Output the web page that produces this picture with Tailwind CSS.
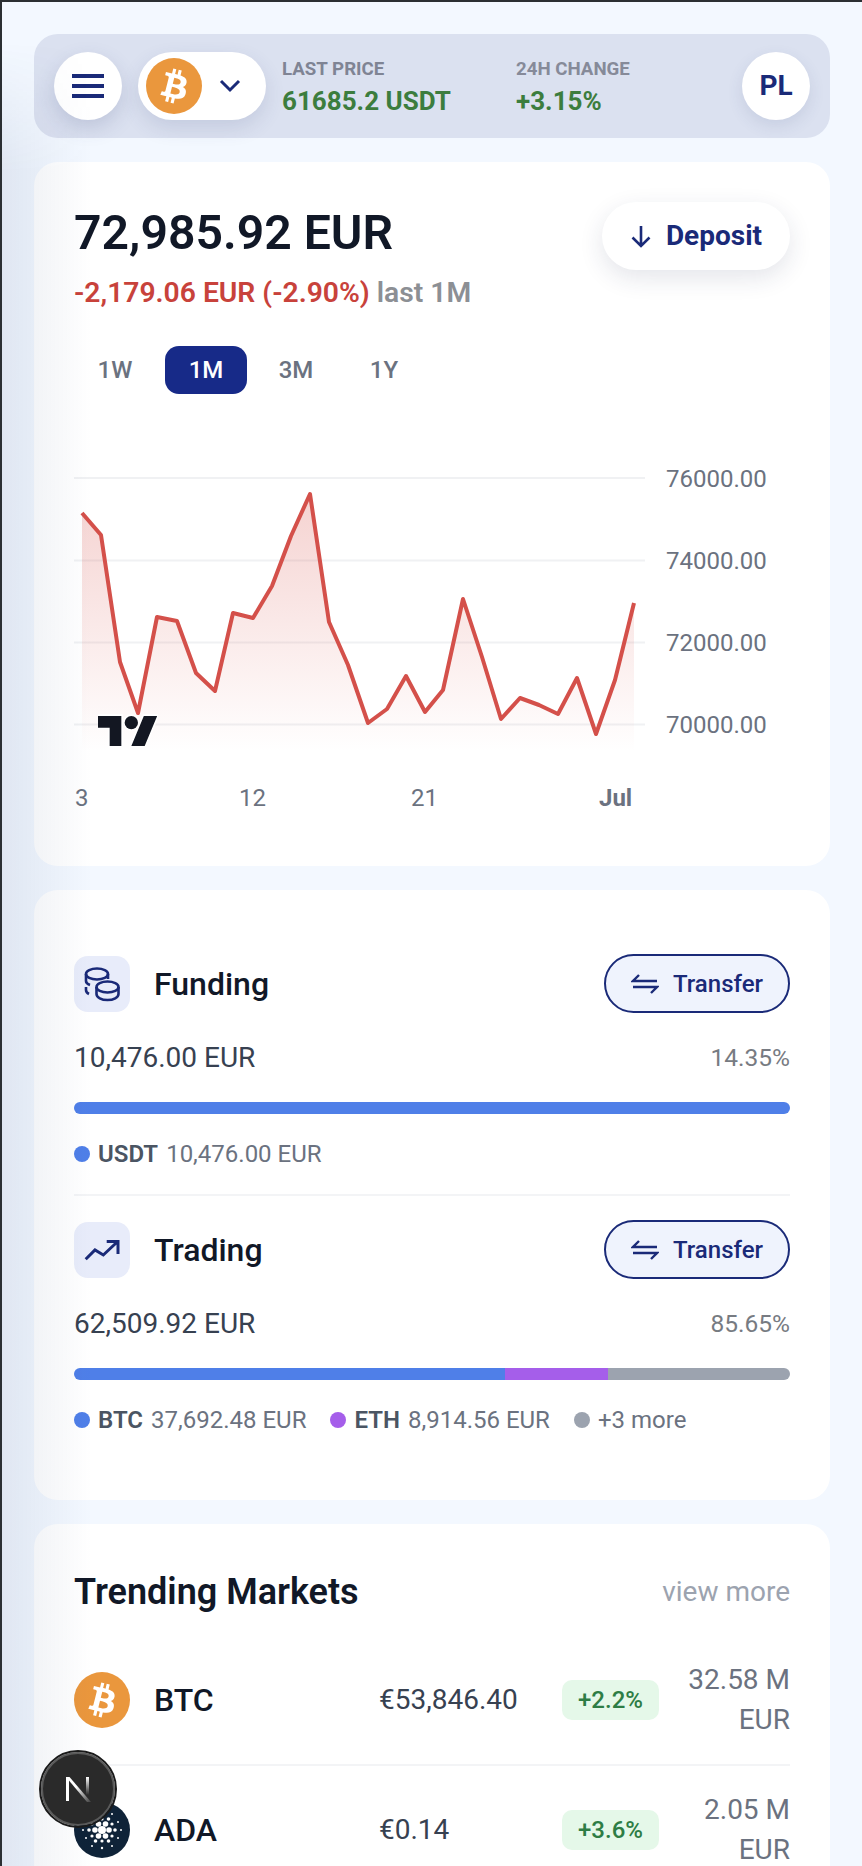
<!DOCTYPE html>
<html lang="en">
<head>
    <meta charset="UTF-8">
    <meta name="viewport" content="width=device-width, initial-scale=1.0">
    <title>Wallet</title>
    <script src="https://cdn.jsdelivr.net/npm/@tailwindcss/browser@4"></script>
</head>
<body class="relative h-screen overflow-hidden border-t-2 border-l-2 border-[#2b2f33] bg-[#f3f8ff] font-[family-name:Roboto,sans-serif]">
    <main class="flex flex-col gap-[24px] pt-[32px] pl-[32px] pr-[32px]">

        <!-- Top bar -->
        <header class="flex h-[104px] shrink-0 items-center rounded-[24px] bg-[#dbe1f0] pl-[20px] pr-[20px]">
            <button class="flex h-[68px] w-[68px] flex-col items-center justify-center gap-[6px] rounded-full bg-white shadow-[0_8px_20px_rgba(60,70,120,0.18)]">
                <span class="h-[4px] w-[32px] bg-[#1a2a78]"></span>
                <span class="h-[4px] w-[32px] bg-[#1a2a78]"></span>
                <span class="h-[4px] w-[32px] bg-[#1a2a78]"></span>
            </button>
            <button class="ml-[16px] flex h-[68px] w-[128px] items-center rounded-full bg-white pl-[8px] shadow-[0_8px_20px_rgba(60,70,120,0.14)]">
                <svg class="h-[56px] w-[56px]" viewBox="0 0 32 32">
                    <circle cx="16" cy="16" r="16" fill="#ea973d"/>
                    <path fill="#fff" d="M23.189 14.02c.314-2.096-1.283-3.223-3.465-3.975l.708-2.84-1.728-.43-.69 2.765c-.454-.114-.92-.22-1.385-.326l.695-2.783L15.596 6l-.708 2.839c-.376-.086-.746-.17-1.104-.26l.002-.009-2.384-.595-.46 1.846s1.283.294 1.256.312c.7.175.826.638.805 1.006l-.806 3.235c.048.012.11.03.18.057l-.183-.045-1.13 4.532c-.086.212-.303.531-.793.41.018.025-1.256-.313-1.256-.313l-.858 1.978 2.25.561c.418.105.828.215 1.231.318l-.715 2.872 1.727.43.708-2.84c.472.127.93.245 1.378.357l-.706 2.828 1.728.43.715-2.866c2.948.558 5.164.333 6.097-2.333.752-2.146-.037-3.385-1.588-4.192 1.13-.26 1.98-1.003 2.207-2.538zm-3.95 5.538c-.533 2.147-4.148.986-5.32.695l.95-3.805c1.172.293 4.929.872 4.37 3.11zm.535-5.569c-.487 1.953-3.495.96-4.47.717l.86-3.45c.975.243 4.118.696 3.61 2.733z"/>
                </svg>
                <svg class="ml-[17px] h-[14px] w-[22px]" viewBox="0 0 22 14" fill="none" stroke="#1a2a78" stroke-width="3"><path d="M2 2l9 9 9-9"/></svg>
            </button>
            <div class="ml-[16px] w-[234px] pt-[2px]">
                <div class="text-[18.700px] leading-[20px] font-bold text-[#7f8494]">LAST PRICE</div>
                <div class="mt-[8px] text-[26px] leading-[28px] font-bold text-[#3c7d3e]">61685.2 USDT</div>
            </div>
            <div class="pt-[2px]">
                <div class="text-[18.700px] leading-[20px] font-bold text-[#868a99]">24H CHANGE</div>
                <div class="mt-[8px] text-[26px] leading-[28px] font-bold text-[#3c7d3e]">+3.15%</div>
            </div>
            <button class="ml-auto flex h-[68px] w-[68px] items-center justify-center rounded-full bg-white text-[28px] font-bold text-[#1a2a78] shadow-[0_6px_16px_rgba(60,70,120,0.12)]">PL</button>
        </header>

        <!-- Balance + chart -->
        <section class="h-[704px] shrink-0 rounded-[24px] bg-white pt-[40px] pl-[40px] pr-[40px]">
            <div class="flex items-start justify-between">
                <div>
                    <div class="text-[48.200px] leading-[62px] font-semibold text-[#111827]">72,985.92 EUR</div>
                    <div class="mt-[12px] text-[28.250px] leading-[34px] font-semibold text-[#c8423b]">-2,179.06 EUR (-2.90%) <span class="text-[#8c8f94]">last 1M</span></div>
                </div>
                <button class="flex h-[68px] w-[188px] items-center justify-center gap-[14px] rounded-full bg-white text-[28px] font-bold text-[#1a2a78] shadow-[0_8px_24px_rgba(30,40,80,0.12)]">
                    <svg class="h-[24px] w-[22px]" viewBox="0 0 22 24" fill="none" stroke="#1a2a78" stroke-width="2.600"><path d="M11 2v20M2.500 13.500L11 22l8.500-8.500"/></svg>
                    Deposit
                </button>
            </div>
            <div class="mt-[36px] flex items-center text-[24px] leading-[48px] font-medium text-[#6b7280]">
                <button class="h-[48px] w-[82px] rounded-[14px]">1W</button>
                <button class="ml-[9px] h-[48px] w-[82px] rounded-[14px] bg-[#172a88] text-white">1M</button>
                <button class="ml-[8px] h-[48px] w-[82px] rounded-[14px]">3M</button>
                <button class="ml-[6px] h-[48px] w-[82px] rounded-[14px]">1Y</button>
            </div>
            <svg class="mt-[60px] -ml-[40px] block" width="796" height="390" viewBox="34 454 796 390">
                <defs>
                    <linearGradient id="area" x1="0" y1="0" x2="0" y2="1" gradientUnits="objectBoundingBox">
                        <stop offset="0" stop-color="#d9534c" stop-opacity="0.26"/>
                        <stop offset="1" stop-color="#d9534c" stop-opacity="0"/>
                    </linearGradient>
                </defs>
                <g stroke="#f0f1f3" stroke-width="2">
                    <path d="M74 478H645M74 560.500H645M74 642.500H645M74 724.500H645"/>
                </g>
                <path fill="url(#area)" d="M82 513L101 535L120 662L138 713L157 617L177 621L196 673L215 691L233 613L253 618L272 586L291 536L310 494L329 622L348 665L368 723L387 709L406 676L425 712L443 690L463 599L482 657L501 719L520 698L539 705L558 714L577 678L596 734L615 680L634 603V752H82Z"/>
                <path fill="none" stroke="#d4504a" stroke-width="4" stroke-linejoin="round" d="M82 513L101 535L120 662L138 713L157 617L177 621L196 673L215 691L233 613L253 618L272 586L291 536L310 494L329 622L348 665L368 723L387 709L406 676L425 712L443 690L463 599L482 657L501 719L520 698L539 705L558 714L577 678L596 734L615 680L634 603"/>
                <g fill="#6b7280" font-size="24">
                    <text x="666" y="486.500">76000.00</text>
                    <text x="666" y="568.500">74000.00</text>
                    <text x="666" y="650.500">72000.00</text>
                    <text x="666" y="732.500">70000.00</text>
                    <text x="75" y="806">3</text>
                    <text x="239" y="806">12</text>
                    <text x="411" y="806">21</text>
                    <text x="599" y="806" font-weight="700">Jul</text>
                </g>
                <svg x="98" y="709.300" width="60" height="46.700" viewBox="0 0 36 28" fill="#131722">
                    <g stroke="#fff" stroke-width="2" paint-order="stroke">
                        <path d="M14 22H7V11H0V4h14v18zM28 22h-8l7.500-18h8L28 22z"/>
                        <circle cx="20" cy="8" r="4"/>
                    </g>
                </svg>
            </svg>
        </section>

        <!-- Accounts -->
        <section class="h-[610px] shrink-0 rounded-[24px] bg-white pl-[40px] pr-[40px] pt-[64px]">
            <div class="flex items-center justify-between">
                <div class="flex items-center gap-[24px]">
                    <div class="h-[56px] w-[56px] rounded-[14px] bg-[#e8ecfa]">
                        <svg viewBox="0 0 56 56" fill="none" stroke="#1a2a78" stroke-width="2.600">
                            <ellipse cx="23" cy="18" rx="11" ry="5.500"/>
                            <path d="M12 18v7c0 2 1 3 4 4M12 31v3c0 2 1 3 3 4M34 18v5"/>
                            <ellipse cx="33.500" cy="31" rx="11" ry="5.500"/>
                            <path d="M22.500 31v7c0 3.500 5 6 11 6s11-2.500 11-6v-7"/>
                        </svg>
                    </div>
                    <span class="text-[32px] font-medium text-[#111827]">Funding</span>
                </div>
                <button class="flex h-[59px] w-[186px] items-center justify-center gap-[14px] rounded-full border-2 border-[#1a2a78] bg-[#eff3fd] text-[24px] font-medium text-[#1a2a78]">
                    <svg class="h-[20px] w-[28px]" viewBox="0 0 28 20" fill="none" stroke="#1a2a78" stroke-width="2.400"><path d="M8 1L2 7H26M2 13H26L20 19"/></svg>
                    Transfer
                </button>
            </div>
            <div class="mt-[28px] flex items-center justify-between">
                <span class="text-[28px] leading-[34px] text-[#374151]">10,476.00 EUR</span>
                <span class="text-[24.500px] leading-[34px] text-[#777b82]">14.35%</span>
            </div>
            <div class="mt-[27px] h-[12px] rounded-full bg-[#4f7fe8]"></div>
            <div class="mt-[26px] flex items-center text-[24px] leading-[28px] text-[#6b7280]">
                <span class="h-[16px] w-[16px] rounded-full bg-[#4f7fe8]"></span>
                <b class="ml-[8px] font-semibold text-[#4b5563]">USDT</b>
                <span class="ml-[8px]">10,476.00 EUR</span>
            </div>
            <div class="mt-[26px] h-[2px] bg-[#f3f4f6]"></div>

            <div class="mt-[24px] flex items-center justify-between">
                <div class="flex items-center gap-[24px]">
                    <div class="h-[56px] w-[56px] rounded-[14px] bg-[#e8ecfa]">
                        <svg viewBox="0 0 56 56" fill="none" stroke="#1a2a78" stroke-width="3"><path d="M11.700 37.300L21 28L29.300 33L43.700 19.500M32.700 19.500H44V32"/></svg>
                    </div>
                    <span class="text-[32px] font-medium text-[#111827]">Trading</span>
                </div>
                <button class="flex h-[59px] w-[186px] items-center justify-center gap-[14px] rounded-full border-2 border-[#1a2a78] bg-[#eff3fd] text-[24px] font-medium text-[#1a2a78]">
                    <svg class="h-[20px] w-[28px]" viewBox="0 0 28 20" fill="none" stroke="#1a2a78" stroke-width="2.400"><path d="M8 1L2 7H26M2 13H26L20 19"/></svg>
                    Transfer
                </button>
            </div>
            <div class="mt-[28px] flex items-center justify-between">
                <span class="text-[28px] leading-[34px] text-[#374151]">62,509.92 EUR</span>
                <span class="text-[24.500px] leading-[34px] text-[#777b82]">85.65%</span>
            </div>
            <div class="mt-[27px] flex h-[12px] overflow-hidden rounded-full">
                <div class="w-[431px] bg-[#4f7fe8]"></div>
                <div class="w-[103px] bg-[#a55eea]"></div>
                <div class="flex-1 bg-[#9ca3af]"></div>
            </div>
            <div class="mt-[26px] flex items-center text-[24px] leading-[28px] text-[#6b7280]">
                <span class="h-[16px] w-[16px] rounded-full bg-[#4f7fe8]"></span>
                <b class="ml-[8px] font-semibold text-[#4b5563]">BTC</b>
                <span class="ml-[8px]">37,692.48 EUR</span>
                <span class="ml-[24px] h-[16px] w-[16px] rounded-full bg-[#a55eea]"></span>
                <b class="ml-[8px] font-semibold text-[#4b5563]">ETH</b>
                <span class="ml-[8px]">8,914.56 EUR</span>
                <span class="ml-[24px] h-[16px] w-[16px] rounded-full bg-[#9ca3af]"></span>
                <span class="ml-[8px]">+3 more</span>
            </div>
        </section>

        <!-- Trending markets -->
        <section class="shrink-0 rounded-[24px] bg-white pl-[40px] pr-[40px] pt-[44px]">
            <div class="flex items-center justify-between">
                <h2 class="text-[36px] leading-[48px] font-semibold text-[#111827]">Trending Markets</h2>
                <span class="text-[28px] text-[#9ca3af]">view more</span>
            </div>
            <div class="mt-[19px] flex h-[131px] items-center border-b-2 border-[#f3f4f6]">
                <svg class="h-[56px] w-[56px] shrink-0" viewBox="0 0 32 32">
                    <circle cx="16" cy="16" r="16" fill="#ea973d"/>
                    <path fill="#fff" d="M23.189 14.02c.314-2.096-1.283-3.223-3.465-3.975l.708-2.84-1.728-.43-.69 2.765c-.454-.114-.92-.22-1.385-.326l.695-2.783L15.596 6l-.708 2.839c-.376-.086-.746-.17-1.104-.26l.002-.009-2.384-.595-.46 1.846s1.283.294 1.256.312c.7.175.826.638.805 1.006l-.806 3.235c.048.012.11.03.18.057l-.183-.045-1.13 4.532c-.086.212-.303.531-.793.41.018.025-1.256-.313-1.256-.313l-.858 1.978 2.25.561c.418.105.828.215 1.231.318l-.715 2.872 1.727.43.708-2.84c.472.127.93.245 1.378.357l-.706 2.828 1.728.43.715-2.866c2.948.558 5.164.333 6.097-2.333.752-2.146-.037-3.385-1.588-4.192 1.13-.26 1.98-1.003 2.207-2.538zm-3.95 5.538c-.533 2.147-4.148.986-5.32.695l.95-3.805c1.172.293 4.929.872 4.37 3.11zm.535-5.569c-.487 1.953-3.495.96-4.47.717l.86-3.45c.975.243 4.118.696 3.61 2.733z"/>
                </svg>
                <span class="ml-[24px] w-[225px] text-[32px] font-medium text-[#111827]">BTC</span>
                <span class="w-[183px] text-[28px] text-[#374151]">€53,846.40</span>
                <span class="flex h-[40px] w-[97px] items-center justify-center rounded-[10px] bg-[#e5f8e9] text-[24px] font-medium text-[#2e7d45]">+2.2%</span>
                <span class="flex-1 text-right text-[28px] leading-[40px] text-[#6b7280]">32.58 M<br>EUR</span>
            </div>
            <div class="flex h-[127px] items-center">
                <svg class="h-[56px] w-[56px] shrink-0" viewBox="0 0 56 56">
                    <circle cx="28" cy="28" r="28" fill="#0f2338"/>
                    <g fill="#fff">
                        <circle cx="28" cy="28" r="4"/>
                        <circle cx="35" cy="28" r="2.800"/><circle cx="21" cy="28" r="2.800"/>
                        <circle cx="31.500" cy="34" r="2.800"/><circle cx="24.500" cy="34" r="2.800"/>
                        <circle cx="31.500" cy="22" r="2.800"/><circle cx="24.500" cy="22" r="2.800"/>
                        <circle cx="41" cy="28" r="1.800"/><circle cx="15" cy="28" r="1.800"/>
                        <circle cx="34.500" cy="39" r="1.800"/><circle cx="21.500" cy="39" r="1.800"/>
                        <circle cx="34.500" cy="17" r="1.800"/><circle cx="21.500" cy="17" r="1.800"/>
                        <circle cx="28" cy="39" r="1.600"/><circle cx="28" cy="17" r="1.600"/>
                        <circle cx="38" cy="34" r="1.600"/><circle cx="18" cy="34" r="1.600"/>
                        <circle cx="38" cy="22" r="1.600"/><circle cx="18" cy="22" r="1.600"/>
                        <circle cx="47" cy="28" r="1"/><circle cx="9" cy="28" r="1"/>
                        <circle cx="28" cy="46" r="1.200"/><circle cx="28" cy="10" r="1.200"/>
                        <circle cx="38" cy="44" r="1"/><circle cx="18" cy="44" r="1"/>
                        <circle cx="38" cy="12" r="1"/><circle cx="18" cy="12" r="1"/>
                        <circle cx="44" cy="36" r="1"/><circle cx="12" cy="36" r="1"/>
                        <circle cx="44" cy="20" r="1"/><circle cx="12" cy="20" r="1"/>
                    </g>
                </svg>
                <span class="ml-[24px] w-[225px] text-[32px] font-medium text-[#111827]">ADA</span>
                <span class="w-[183px] text-[28px] text-[#374151]">€0.14</span>
                <span class="flex h-[40px] w-[97px] items-center justify-center rounded-[10px] bg-[#e5f8e9] text-[24px] font-medium text-[#2e7d45]">+3.6%</span>
                <span class="flex-1 text-right text-[28px] leading-[40px] text-[#6b7280]">2.05 M<br>EUR</span>
            </div>
        </section>
    </main>

    <!-- Soft shade along the left edge -->
    <div class="pointer-events-none absolute top-0 bottom-0 left-0 w-[90px] bg-linear-to-r from-[#1e3a6e]/9 to-transparent [mask-image:linear-gradient(to_bottom,transparent_40px,black_170px)]"></div>

    <!-- Dev indicator -->
    <div class="fixed top-[1752px] left-[41px] flex h-[74px] w-[74px] items-center justify-center rounded-full border-2 border-[#5a5a5a] bg-[#2a2a2a] outline-2 outline-[#1a1a1a]">
        <svg class="h-[30px] w-[30px]" viewBox="0 0 30 30" fill="none">
            <defs>
                <linearGradient id="nfade" x1="0" y1="0" x2="1" y2="1">
                    <stop offset="0.4" stop-color="#fff"/>
                    <stop offset="1" stop-color="#fff" stop-opacity="0.1"/>
                </linearGradient>
                <linearGradient id="nbar" x1="0" y1="0" x2="0" y2="1">
                    <stop offset="0" stop-color="#fff"/>
                    <stop offset="1" stop-color="#fff" stop-opacity="0"/>
                </linearGradient>
            </defs>
            <rect x="3" y="3" width="3" height="24" fill="#fff"/>
            <path d="M3 3h3.500L28 28h-4z" fill="url(#nfade)"/>
            <rect x="23" y="3" width="3" height="18" fill="url(#nbar)"/>
        </svg>
    </div>
</body>
</html>
